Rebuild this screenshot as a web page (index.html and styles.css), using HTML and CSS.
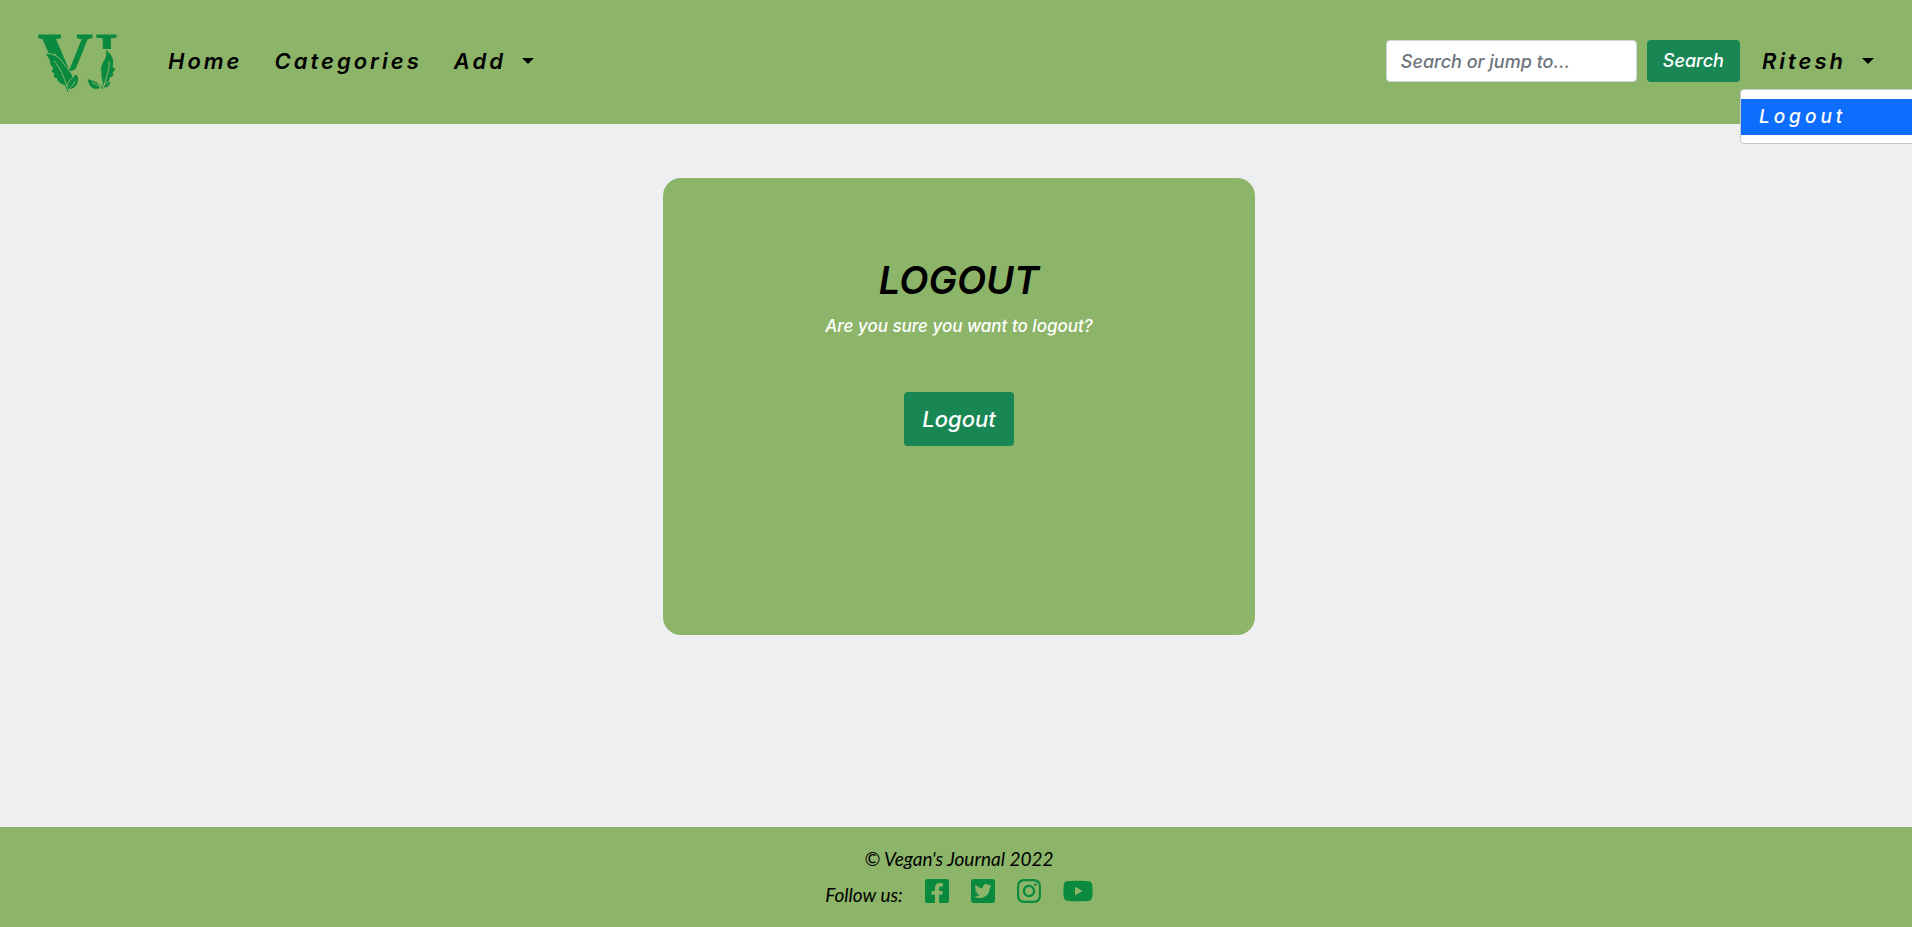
FILE: index.html
```html
<!DOCTYPE html>
<html lang="en">
<head>
<meta charset="utf-8">
<meta name="viewport" content="width=device-width, initial-scale=1">
<title>Vegan's Journal</title>
<link rel="stylesheet" href="styles.css">
</head>
<body>
<header class="navbar">
  <a class="brand" href="#" aria-label="Vegan's Journal home">
    <svg class="logo" viewBox="0 -20 84 104" aria-hidden="true">
      <defs>
        <clipPath id="letter-tops"><path d="M0 0H84V20H62V30L40 40L30 44L26 32L19 25H0Z"/></clipPath>
      </defs>
      <g clip-path="url(#letter-tops)">
        <text class="logo-letters" x="2" y="56">V<tspan class="logo-j" x="52">J</tspan></text>
      </g>
      <g class="logo-leaves">
        <path d="M9 25C16 23 24 28 28 35C31 40 36 43 37 48L31 57C25 56 21 53 21 50L17 48L18 45L15 42L17 39L14 36C14 31 12 28 9 25Z"/>
        <path d="M31 60C31 52 36 49 40 45C44 48 43 54 40 57C38 60 34 61 31 60Z"/>
        <path d="M69 20C77 25 79 32 77 38L80 40L77 44L78 47L74 49C74 53 71 56 67 58C67 53 64 49 65 44C64 39 65 35 68 31C70 27 70 24 69 20Z"/>
        <path d="M51 49C56 52 62 51 65 59C58 63 52 58 51 49Z"/>
        <path d="M67 59C68 55 71 53 75 52C74 57 72 59 67 59Z"/>
      </g>
      <path class="logo-veins" d="M18 32C24 38 28 48 31 58M39 52C38 55 36 57 33 60M73 32C74 40 70 48 68 57M56 54C59 54 61 56 65 59"/>
      <path class="logo-stems" d="M29 55L32 63M66 56L66 60"/>
    </svg>
  </a>
  <nav class="nav-links">
    <a href="#">Home</a>
    <a href="#">Categories</a>
    <button class="toggle" type="button">Add <span class="caret"></span></button>
  </nav>
  <form class="search" role="search">
    <input class="search-box" type="search" placeholder="Search or jump to..." aria-label="Search">
    <button class="button" type="submit">Search</button>
  </form>
  <div class="account">
    <button class="toggle" type="button" aria-expanded="true">Ritesh <span class="caret"></span></button>
    <div class="menu"><a class="menu-item" href="#">Logout</a></div>
  </div>
</header>
<main class="content">
  <section class="card">
    <h1 class="card-title">LOGOUT</h1>
    <p class="card-text">Are you sure you want to logout?</p>
    <button class="button button-large" type="button">Logout</button>
  </section>
</main>
<footer class="footer">
  <p class="copyright">© Vegan's Journal 2022</p>
  <div class="social">
    <span class="follow">Follow us:</span>
    <a href="#" aria-label="Facebook"><svg class="icon" viewBox="0 32 448 448"><path d="M400 32H48A48 48 0 0 0 0 80v352a48 48 0 0 0 48 48h137.250V327.690h-63V256h63v-54.640c0-62.150 37-96.480 93.670-96.480 27.140 0 55.520 4.840 55.520 4.840v61h-31.270c-30.810 0-40.420 19.120-40.420 38.730V256h68.780l-11 71.690h-57.780V480H400a48 48 0 0 0 48-48V80a48 48 0 0 0-48-48z"/></svg></a>
    <a href="#" aria-label="Twitter"><svg class="icon" viewBox="0 32 448 448"><path d="M400 32H48C21.500 32 0 53.500 0 80v352c0 26.500 21.500 48 48 48h352c26.500 0 48-21.500 48-48V80c0-26.500-21.500-48-48-48zm-48.900 158.800c.2 2.800.2 5.700.2 8.500 0 86.700-66 186.600-186.600 186.600-37.200 0-71.700-10.800-100.700-29.400 5.300.6 10.400.8 15.800.8 30.700 0 58.900-10.400 81.400-28-28.800-.6-53-19.500-61.300-45.500 10.100 1.500 19.200 1.500 29.600-1.200-30-6.100-52.500-32.500-52.500-64.400v-.8c8.700 4.900 18.900 7.900 29.600 8.300a65.447 65.447 0 0 1-29.200-54.600c0-12.200 3.200-23.400 8.900-33.100 32.300 39.800 80.800 65.800 135.200 68.600-9.300-44.500 24-80.600 64-80.600 18.900 0 35.900 7.900 47.900 20.700 14.800-2.800 29-8.300 41.600-15.800-4.900 15.200-15.200 28-28.800 36.100 13.200-1.400 26-5.100 37.800-10.200-8.900 13.100-20.100 24.700-32.900 34z"/></svg></a>
    <a href="#" aria-label="Instagram"><svg class="icon" viewBox="0 32 448 448"><path d="M224.100 141c-63.600 0-114.900 51.300-114.900 114.900s51.300 114.900 114.900 114.900S339 319.500 339 255.900 287.700 141 224.100 141zm0 189.600c-41.100 0-74.700-33.500-74.700-74.700s33.500-74.700 74.700-74.700 74.700 33.500 74.700 74.700-33.600 74.700-74.700 74.700zm146.400-194.300c0 14.900-12 26.800-26.800 26.800-14.900 0-26.800-12-26.800-26.800s12-26.800 26.800-26.800 26.800 12 26.800 26.800zm76.100 27.200c-1.700-35.900-9.900-67.700-36.200-93.900-26.200-26.200-58-34.400-93.900-36.200-37-2.100-147.900-2.100-184.900 0-35.800 1.700-67.600 9.900-93.900 36.100s-34.400 58-36.200 93.900c-2.100 37-2.100 147.900 0 184.900 1.700 35.900 9.900 67.700 36.200 93.900s58 34.400 93.900 36.200c37 2.100 147.900 2.100 184.900 0 35.900-1.700 67.700-9.900 93.900-36.200 26.200-26.200 34.400-58 36.200-93.900 2.100-37 2.100-147.800 0-184.800zM398.800 388c-7.800 19.600-22.900 34.700-42.600 42.600-29.500 11.700-99.500 9-132.100 9s-102.700 2.600-132.100-9c-19.600-7.800-34.700-22.900-42.600-42.600-11.700-29.500-9-99.500-9-132.100s-2.600-102.700 9-132.100c7.800-19.600 22.900-34.700 42.600-42.600 29.500-11.700 99.500-9 132.100-9s102.700-2.600 132.100 9c19.600 7.800 34.700 22.900 42.600 42.600 11.700 29.500 9 99.500 9 132.100s2.700 102.700-9 132.100z"/></svg></a>
    <a href="#" aria-label="YouTube"><svg class="icon icon-wide" viewBox="14 32 548 448"><path d="M549.655 124.083c-6.281-23.650-24.787-42.276-48.284-48.597C458.781 64 288 64 288 64S117.220 64 74.629 75.486c-23.497 6.322-42.003 24.947-48.284 48.597-11.412 42.867-11.412 132.305-11.412 132.305s0 89.438 11.412 132.305c6.281 23.650 24.787 41.500 48.284 47.821C117.220 448 288 448 288 448s170.780 0 213.371-11.486c23.497-6.321 42.003-24.171 48.284-47.821 11.412-42.867 11.412-132.305 11.412-132.305s0-89.438-11.412-132.305zm-317.510 213.508V175.185l142.739 81.205-142.739 81.201z"/></svg></a>
  </div>
</footer>
</body>
</html>
```
FILE: styles.css
```css
* { box-sizing: border-box; }

body {
  margin: 0;
  min-height: 100vh;
  display: flex;
  flex-direction: column;
  overflow-x: hidden;
  background: #eeeff1;
  color: #000;
  font: italic 500 18px/28px Inter, "Open Sans", sans-serif;
}

a { color: inherit; text-decoration: none; }

button, input { font: inherit; }

.navbar {
  display: flex;
  align-items: center;
  height: 124px;
  padding: 0 38px 2px 36px;
  background: #8db569;
}

.brand { display: flex; margin-right: 48px; }

.logo { width: 84px; height: 104px; }

.logo-letters {
  fill: #0a8a3e;
  stroke: #0a8a3e;
  font: bold 76px "Liberation Serif", serif;
}

.logo-j { font-weight: normal; }

.logo-leaves { fill: #0a8a3e; stroke: #8db569; }

.logo-veins { fill: none; stroke: #8db569; stroke-width: 1; }

.logo-stems { fill: none; stroke: #0a8a3e; stroke-width: 1; }

.nav-links {
  display: flex;
  align-items: center;
  gap: 32px;
  margin-right: auto;
  font-size: 22px;
  font-weight: 600;
  line-height: 36px;
  letter-spacing: 3px;
}

.toggle {
  display: flex;
  align-items: center;
  gap: 16px;
  padding: 0;
  border: 0;
  background: none;
  color: inherit;
  letter-spacing: inherit;
}

.caret {
  border-top: 6px solid;
  border-left: 6px solid transparent;
  border-right: 6px solid transparent;
}

.search { display: flex; gap: 10px; margin-right: 22px; }

.search-box {
  width: 251px;
  height: 42px;
  padding: 0 14px;
  border: 1px solid #ced4da;
  border-radius: 4px;
  background: #fff;
}

.search-box::placeholder { color: #6c757d; opacity: 1; }

.button {
  height: 42px;
  padding: 0 16px;
  border: 0;
  border-radius: 4px;
  background: #198754;
  color: #fff;
}

.account {
  position: relative;
  font-size: 22px;
  font-weight: 600;
  line-height: 36px;
  letter-spacing: 3px;
}

.menu {
  position: absolute;
  top: 46px;
  left: -22px;
  width: 180px;
  padding: 9px 0 8px;
  border: 1px solid #c4c8c6;
  border-radius: 4px;
  background: #fff;
}

.menu-item {
  display: block;
  padding: 0 18px;
  background: #0d6efd;
  color: #fff;
  font-size: 19px;
  font-weight: 500;
  letter-spacing: 4px;
}

.content {
  flex: 1;
  padding: 54px 0 54px 6px;
}

.card {
  display: flex;
  flex-direction: column;
  align-items: center;
  width: 592px;
  max-width: 100%;
  min-height: 457px;
  margin: 0 auto;
  padding: 78px 24px 24px;
  border-radius: 18px;
  background: #8db569;
}

.card-title {
  margin: 0 0 8px;
  font-size: 38px;
  font-weight: 600;
  line-height: 48px;
}

.card-text {
  margin: 0 0 52px;
  color: #fff;
  font-size: 17px;
}

.button-large {
  height: 54px;
  padding: 0 18px;
  font-size: 22px;
}

.footer {
  display: flex;
  flex-direction: column;
  align-items: center;
  height: 100px;
  padding: 18px 0 0 6px;
  background: #8db569;
  font-family: Lato, sans-serif;
  font-size: 19px;
  font-weight: 400;
}

.copyright { margin: 0; }

.social {
  display: flex;
  gap: 22px;
  padding-top: 6px;
}

.follow { padding-top: 2px; }

.icon {
  display: block;
  width: 24px;
  height: 24px;
  fill: #0a8a3e;
}

.icon-wide { width: 30px; }
```
